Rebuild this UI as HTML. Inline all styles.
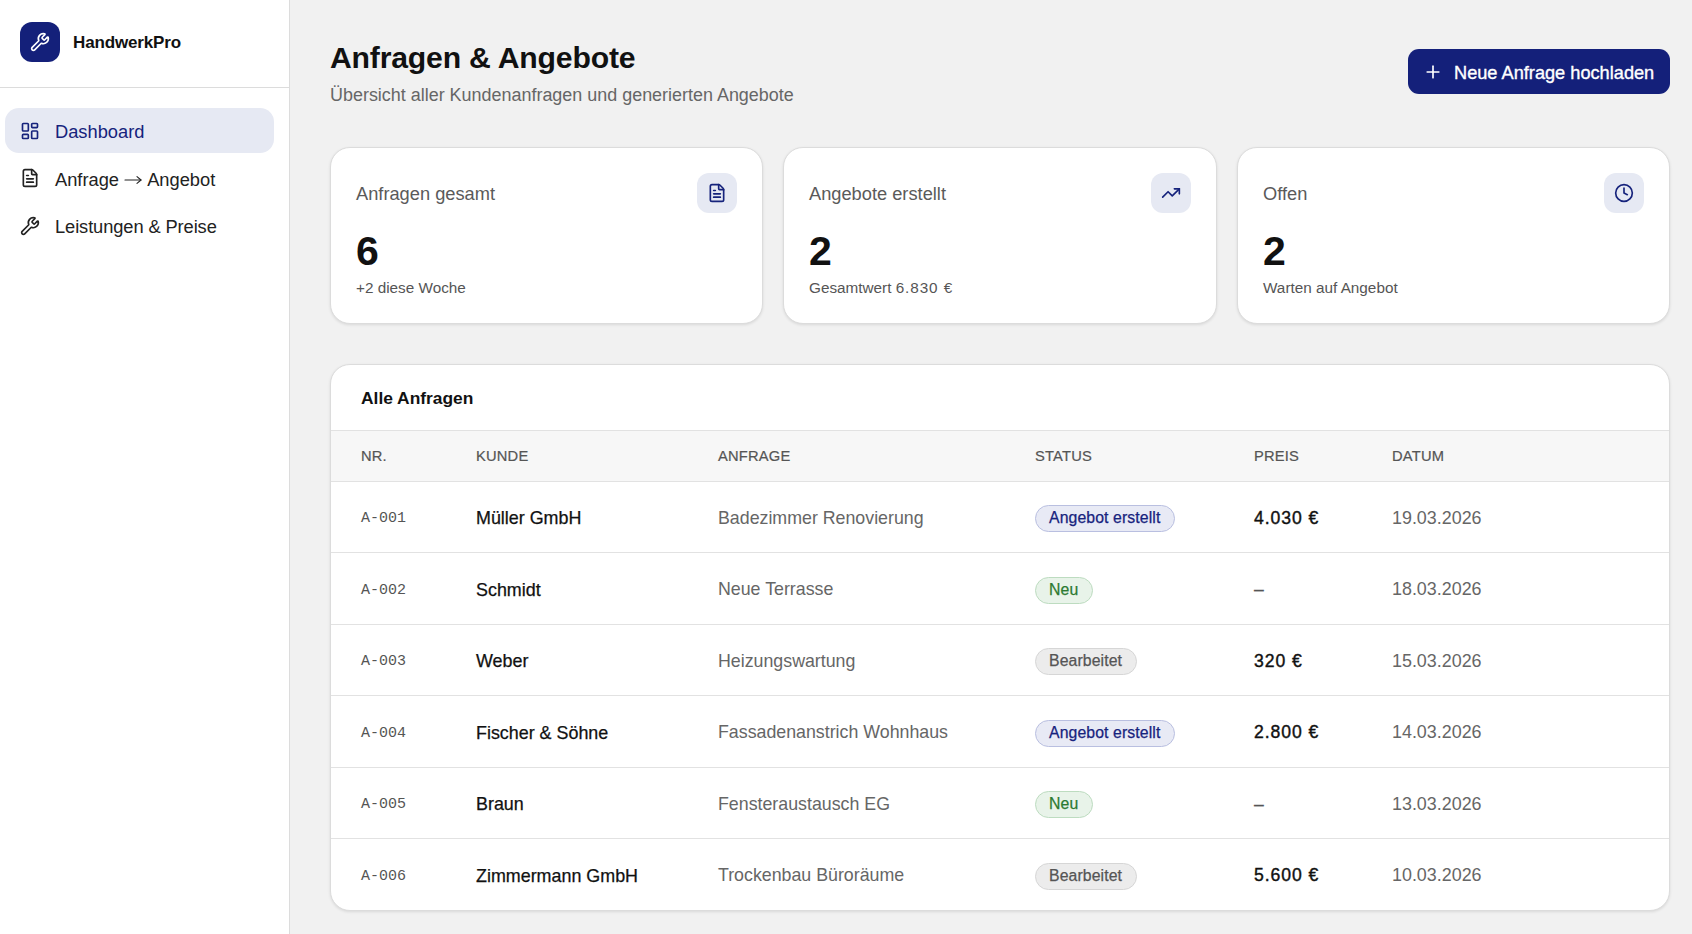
<!DOCTYPE html>
<html lang="de">
<head>
<meta charset="utf-8">
<style>
*{box-sizing:border-box;margin:0;padding:0}
html,body{width:1692px;height:934px;overflow:hidden}
body{font-family:"Liberation Sans",sans-serif;background:#f1f1f1;color:#111;position:relative}
.sb{position:absolute;left:0;top:0;width:290px;height:934px;background:#fff;border-right:1px solid #dcdcdc}
.logo{position:absolute;left:20px;top:22px;width:40px;height:40px;border-radius:12px;background:#14207a}
.logo svg{position:absolute;left:10px;top:10px}
.brand{position:absolute;left:73px;top:33px;font-size:17.0px;line-height:20px;font-weight:700;color:#111;letter-spacing:-0.15px}
.sbdiv{position:absolute;left:0;top:87px;width:289px;height:1px;background:#dcdcdc}
.nav{position:absolute;left:5px;width:269px;height:45px;border-radius:14px}
.nav.active{background:#e6e9f3}
.nav svg{position:absolute;left:15px;top:12px}
.nav span{position:absolute;left:50px;top:13px;font-size:18.3px;line-height:21px;color:#222;white-space:nowrap}
.nav span svg.arr{position:static;display:inline-block;vertical-align:middle;margin:0 1px 0 0;position:relative;top:-1px;left:0}
.nav.active span{color:#16237c}
h1{position:absolute;left:330px;top:41px;font-size:30.2px;line-height:34px;font-weight:700;color:#111;letter-spacing:-0.2px}
.sub{position:absolute;left:330px;top:85px;font-size:17.95px;line-height:21px;color:#666}
.btn{position:absolute;left:1408px;top:49px;width:262px;height:45px;border-radius:11px;background:#14207a;color:#fff}
.btn svg{position:absolute;left:15px;top:13px}
.btn span{position:absolute;left:46px;top:14px;font-size:18.2px;line-height:20px;color:#fff;-webkit-text-stroke:0.35px #fff;white-space:nowrap}
.card{position:absolute;top:147px;height:177px;background:#fff;border:1px solid #dcdcdc;border-radius:20px;box-shadow:0 1px 3px rgba(0,0,0,0.1)}
.card .lbl{position:absolute;left:25px;top:35px;font-size:18.25px;line-height:21px;color:#5a5a5a}
.card .ib{position:absolute;right:25px;top:25px;width:40px;height:40px;border-radius:12px;background:#e6e9f3}
.card .ib svg{position:absolute;left:10px;top:10px}
.card .num{position:absolute;left:25px;top:80px;font-size:41px;line-height:46px;font-weight:700;color:#111}
.card .note{position:absolute;left:25px;top:131px;font-size:15.3px;line-height:18px;color:#555}
.tbl{position:absolute;left:330px;top:364px;width:1340px;height:547px;background:#fff;border:1px solid #dcdcdc;border-radius:20px;box-shadow:0 1px 3px rgba(0,0,0,0.1);overflow:hidden}
.tt{position:absolute;left:30px;top:23px;font-size:17.4px;line-height:20px;font-weight:700;color:#111}
.thead{position:absolute;left:0;top:65px;width:100%;height:52px;background:#f7f7f7;border-top:1px solid #e2e2e2;border-bottom:1px solid #e2e2e2}
.th{position:absolute;top:16px;font-size:14.7px;line-height:18px;color:#555;letter-spacing:0.2px;-webkit-text-stroke:0.2px #555}
.hl{position:absolute;left:0;width:100%;height:1px;background:#e2e2e2}
.c{position:absolute;display:flex;align-items:center;white-space:nowrap;padding-top:1px}
.nr{font-family:"Liberation Mono",monospace;font-size:15px;color:#555;padding-top:3px}
.kd{font-size:17.9px;color:#111;-webkit-text-stroke:0.25px #111;padding-top:3px}
.an{font-size:17.8px;color:#666;padding-top:2px}
.pr{font-size:17.6px;font-weight:400;color:#111;-webkit-text-stroke:0.4px #111;letter-spacing:0.95px;padding-top:2px}
.dt{font-size:17.9px;color:#666;padding-top:2px}
.badge{display:inline-block;height:27px;line-height:24px;position:relative;top:1px;padding:0 14px 0 13px;border-radius:14px;font-size:15.8px;border:1px solid;-webkit-text-stroke:0.25px currentColor;letter-spacing:0.1px}
.b-ang{background:#e8eaf5;color:#17237e;border-color:#b9bfe0}
.b-neu{background:#e8f3e9;color:#2c7a32;border-color:#bddcc0}
.b-bea{background:#ececec;color:#555;border-color:#d6d6d6}

.dg{letter-spacing:0.9px}
.pr.dash{color:#555;-webkit-text-stroke:0.2px #555;letter-spacing:0}

</style>
</head>
<body>
<div class="sb"><div class="logo"><svg width="20" height="20" viewBox="0 0 24 24" fill="none" stroke="#fff" stroke-width="2" stroke-linecap="round" stroke-linejoin="round"><path d="M14.7 6.3a1 1 0 0 0 0 1.4l1.6 1.6a1 1 0 0 0 1.4 0l3.106-3.105c.32-.322.863-.22.983.218a6 6 0 0 1-8.259 7.057l-7.91 7.91a1 1 0 0 1-2.999-3l7.91-7.91a6 6 0 0 1 7.057-8.259c.438.12.54.662.219.984z"/></svg></div><div class="brand">HandwerkPro</div><div class="sbdiv"></div><div class="nav active" style="top:108px"><svg width="20" height="20" viewBox="0 0 24 24" fill="none" stroke="#16237c" stroke-width="2" stroke-linecap="round" stroke-linejoin="round" style="top:13px"><rect width="7" height="9" x="3" y="3" rx="1"/><rect width="7" height="5" x="14" y="3" rx="1"/><rect width="7" height="9" x="14" y="12" rx="1"/><rect width="7" height="5" x="3" y="16" rx="1"/></svg><span>Dashboard</span></div><div class="nav" style="top:156px"><svg width="20" height="20" viewBox="0 0 24 24" fill="none" stroke="#222" stroke-width="2" stroke-linecap="round" stroke-linejoin="round"><path d="M6 22a2 2 0 0 1-2-2V4a2 2 0 0 1 2-2h8a2.4 2.4 0 0 1 1.704.706l3.588 3.588A2.4 2.4 0 0 1 20 8v12a2 2 0 0 1-2 2z"/><path d="M14 2v5a1 1 0 0 0 1 1h5"/><path d="M10 9H8"/><path d="M16 13H8"/><path d="M16 17H8"/></svg><span>Anfrage <svg class="arr" width="18" height="10" viewBox="0 0 18 10" fill="none" stroke="#222" stroke-width="1.1" stroke-linecap="round" stroke-linejoin="round"><path d="M1 5h16"/><path d="M13 1.6l4 3.4-4 3.4"/></svg> Angebot</span></div><div class="nav" style="top:203px"><svg width="20" height="20" viewBox="0 0 24 24" fill="none" stroke="#222" stroke-width="2" stroke-linecap="round" stroke-linejoin="round" style="top:13px"><path d="M14.7 6.3a1 1 0 0 0 0 1.4l1.6 1.6a1 1 0 0 0 1.4 0l3.106-3.105c.32-.322.863-.22.983.218a6 6 0 0 1-8.259 7.057l-7.91 7.91a1 1 0 0 1-2.999-3l7.91-7.91a6 6 0 0 1 7.057-8.259c.438.12.54.662.219.984z"/></svg><span style="letter-spacing:-0.1px">Leistungen &amp; Preise</span></div></div>
<h1>Anfragen &amp; Angebote</h1>
<div class="sub">Übersicht aller Kundenanfragen und generierten Angebote</div>
<div class="btn"><svg width="20" height="20" viewBox="0 0 24 24" fill="none" stroke="#fff" stroke-width="2" stroke-linecap="round" stroke-linejoin="round"><path d="M5 12h14"/><path d="M12 5v14"/></svg><span>Neue Anfrage hochladen</span></div>
<div class="card" style="left:330px;width:433px"><div class="lbl">Anfragen gesamt</div><div class="ib"><svg width="20" height="20" viewBox="0 0 24 24" fill="none" stroke="#16237c" stroke-width="2" stroke-linecap="round" stroke-linejoin="round"><path d="M6 22a2 2 0 0 1-2-2V4a2 2 0 0 1 2-2h8a2.4 2.4 0 0 1 1.704.706l3.588 3.588A2.4 2.4 0 0 1 20 8v12a2 2 0 0 1-2 2z"/><path d="M14 2v5a1 1 0 0 0 1 1h5"/><path d="M10 9H8"/><path d="M16 13H8"/><path d="M16 17H8"/></svg></div><div class="num">6</div><div class="note">+2 diese Woche</div></div>
<div class="card" style="left:783px;width:434px"><div class="lbl">Angebote erstellt</div><div class="ib"><svg width="20" height="20" viewBox="0 0 24 24" fill="none" stroke="#16237c" stroke-width="2" stroke-linecap="round" stroke-linejoin="round"><polyline points="22 7 13.5 15.5 8.5 10.5 2 17"/><polyline points="16 7 22 7 22 13"/></svg></div><div class="num">2</div><div class="note">Gesamtwert <span class="dg">6.830 €</span></div></div>
<div class="card" style="left:1237px;width:433px"><div class="lbl">Offen</div><div class="ib"><svg width="20" height="20" viewBox="0 0 24 24" fill="none" stroke="#16237c" stroke-width="2" stroke-linecap="round" stroke-linejoin="round"><circle cx="12" cy="12" r="10"/><polyline points="12 6 12 12 16 14"/></svg></div><div class="num">2</div><div class="note">Warten auf Angebot</div></div>
<div class="tbl"><div class="tt">Alle Anfragen</div><div class="thead"><div class="th" style="left:30px">NR.</div><div class="th" style="left:145px">KUNDE</div><div class="th" style="left:387px">ANFRAGE</div><div class="th" style="left:704px">STATUS</div><div class="th" style="left:923px">PREIS</div><div class="th" style="left:1061px">DATUM</div></div><div class="hl" style="top:187px"></div><div class="c nr" style="left:30px;top:117px;height:70px">A-001</div><div class="c kd" style="left:145px;top:117px;height:70px">Müller GmbH</div><div class="c an" style="left:387px;top:117px;height:70px">Badezimmer Renovierung</div><div class="c" style="left:704px;top:117px;height:70px"><span class="badge b-ang">Angebot erstellt</span></div><div class="c pr" style="left:923px;top:117px;height:70px">4.030 €</div><div class="c dt" style="left:1061px;top:117px;height:70px">19.03.2026</div>
<div class="hl" style="top:259px"></div><div class="c nr" style="left:30px;top:188px;height:71px">A-002</div><div class="c kd" style="left:145px;top:188px;height:71px">Schmidt</div><div class="c an" style="left:387px;top:188px;height:71px">Neue Terrasse</div><div class="c" style="left:704px;top:188px;height:71px"><span class="badge b-neu">Neu</span></div><div class="c pr dash" style="left:923px;top:188px;height:71px">–</div><div class="c dt" style="left:1061px;top:188px;height:71px">18.03.2026</div>
<div class="hl" style="top:330px"></div><div class="c nr" style="left:30px;top:260px;height:70px">A-003</div><div class="c kd" style="left:145px;top:260px;height:70px">Weber</div><div class="c an" style="left:387px;top:260px;height:70px">Heizungswartung</div><div class="c" style="left:704px;top:260px;height:70px"><span class="badge b-bea">Bearbeitet</span></div><div class="c pr" style="left:923px;top:260px;height:70px">320 €</div><div class="c dt" style="left:1061px;top:260px;height:70px">15.03.2026</div>
<div class="hl" style="top:402px"></div><div class="c nr" style="left:30px;top:331px;height:71px">A-004</div><div class="c kd" style="left:145px;top:331px;height:71px">Fischer &amp; Söhne</div><div class="c an" style="left:387px;top:331px;height:71px">Fassadenanstrich Wohnhaus</div><div class="c" style="left:704px;top:331px;height:71px"><span class="badge b-ang">Angebot erstellt</span></div><div class="c pr" style="left:923px;top:331px;height:71px">2.800 €</div><div class="c dt" style="left:1061px;top:331px;height:71px">14.03.2026</div>
<div class="hl" style="top:473px"></div><div class="c nr" style="left:30px;top:403px;height:70px">A-005</div><div class="c kd" style="left:145px;top:403px;height:70px">Braun</div><div class="c an" style="left:387px;top:403px;height:70px">Fensteraustausch EG</div><div class="c" style="left:704px;top:403px;height:70px"><span class="badge b-neu">Neu</span></div><div class="c pr dash" style="left:923px;top:403px;height:70px">–</div><div class="c dt" style="left:1061px;top:403px;height:70px">13.03.2026</div>
<div class="c nr" style="left:30px;top:474px;height:71px">A-006</div><div class="c kd" style="left:145px;top:474px;height:71px">Zimmermann GmbH</div><div class="c an" style="left:387px;top:474px;height:71px">Trockenbau Büroräume</div><div class="c" style="left:704px;top:474px;height:71px"><span class="badge b-bea">Bearbeitet</span></div><div class="c pr" style="left:923px;top:474px;height:71px">5.600 €</div><div class="c dt" style="left:1061px;top:474px;height:71px">10.03.2026</div>
</div>
</body>
</html>
